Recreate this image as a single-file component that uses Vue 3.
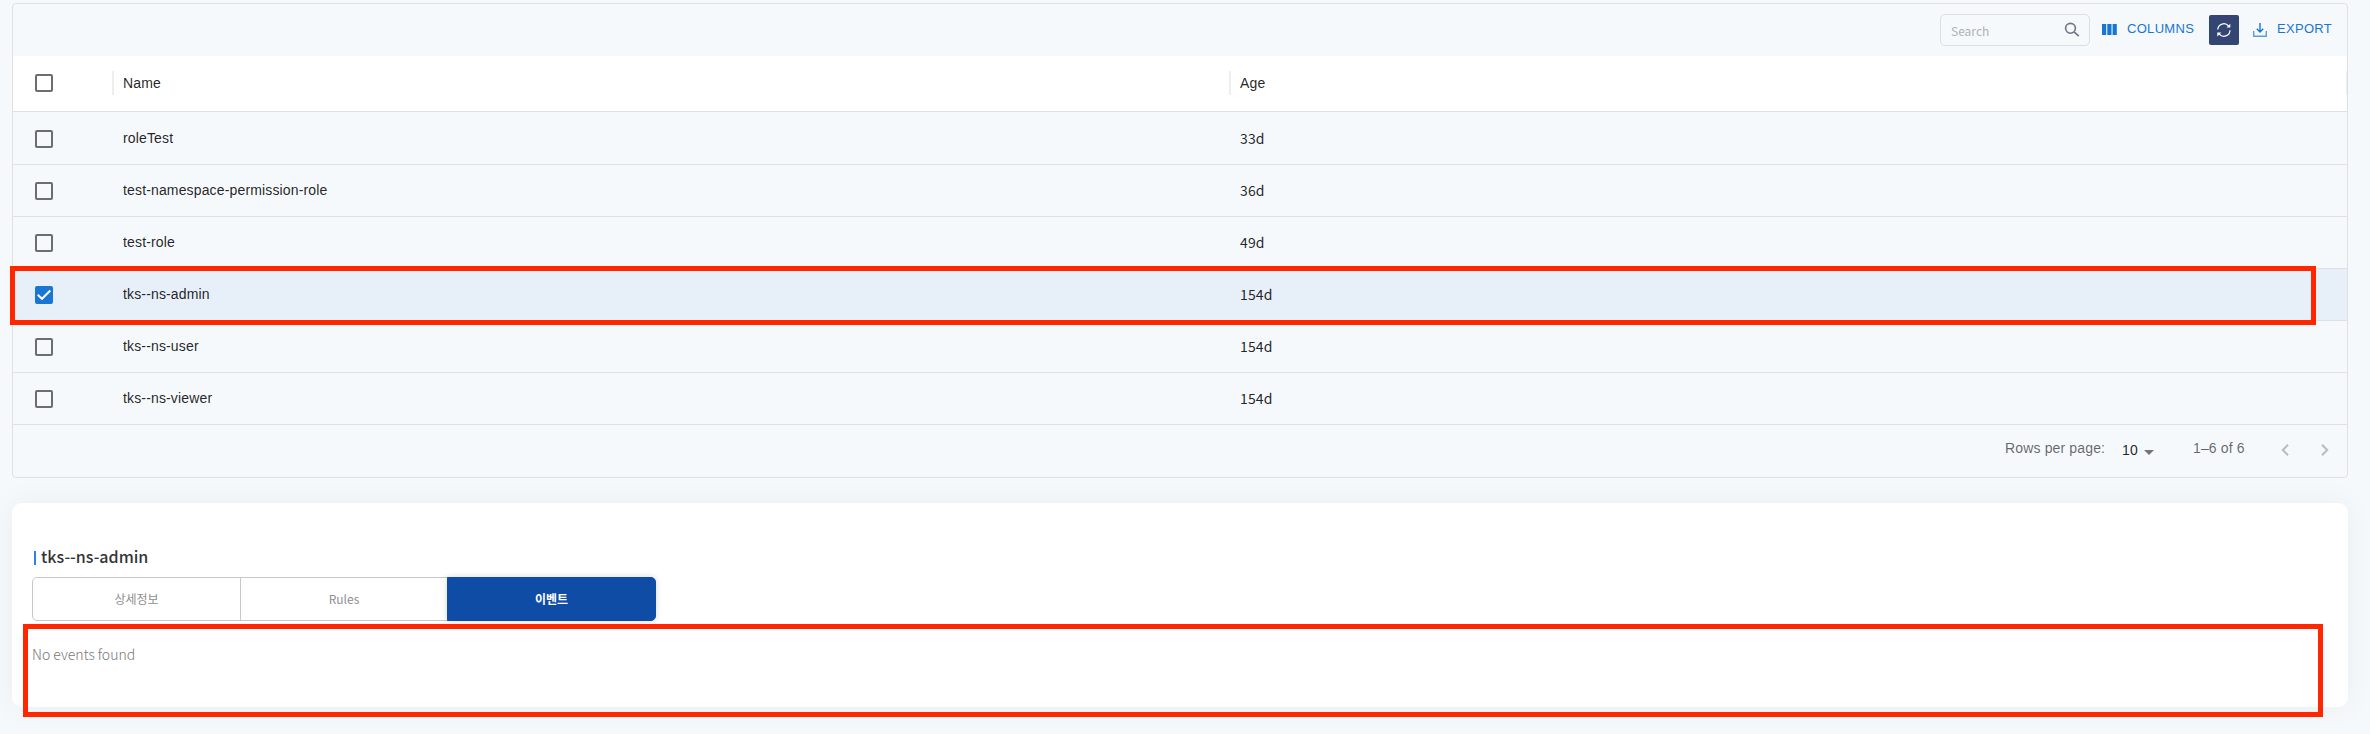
<script setup>
import { ref } from 'vue'

const rows = ref([
  { name: 'roleTest', age: '33d', selected: false },
  { name: 'test-namespace-permission-role', age: '36d', selected: false },
  { name: 'test-role', age: '49d', selected: false },
  { name: 'tks--ns-admin', age: '154d', selected: true },
  { name: 'tks--ns-user', age: '154d', selected: false },
  { name: 'tks--ns-viewer', age: '154d', selected: false },
])
const tabs = ['상세정보', 'Rules', '이벤트']
const activeTab = ref(2)
</script>

<template>
  <main class="page">
    <section class="grid">
      <div class="toolbar">
        <label class="search">
          <span>Search</span>
          <svg width="16" height="16" viewBox="0 0 16 16" fill="none" stroke="#6e7484" stroke-width="1.6">
            <circle cx="6.5" cy="6.3" r="4.9" />
            <path d="M10.1 9.9L14.8 14.2" />
          </svg>
        </label>
        <button class="tool columns">
          <svg width="15" height="11" viewBox="0 0 15 11" fill="#1976d2">
            <path d="M0 0h4.2v11H0zM5.3 0h4.2v11H5.3zM10.6 0h4.2v11h-4.2z" />
          </svg>
          <span>COLUMNS</span>
        </button>
        <button class="refresh">
          <svg width="16" height="16" viewBox="0 0 16 16" fill="none" stroke="#fff" stroke-width="1.2">
            <path d="M1.8 7.6A6 6 0 0 1 12.6 4.2M14 8.2A6 6 0 0 1 3.2 11.8" />
            <path d="M14.3 1.8v3.8h-3.8zM1.3 14.4v-4h4z" fill="#fff" stroke="none" />
          </svg>
        </button>
        <button class="tool export">
          <svg width="14" height="14" viewBox="0 0 14 14" fill="none" stroke="#1976d2" stroke-width="1.4">
            <path d="M7 0v9M3.8 5.8L7 9l3.2-3.2" />
            <path d="M.7 8v5.3h12.6V8" stroke="#5d9bdf" />
          </svg>
          <span>EXPORT</span>
        </button>
      </div>

      <div class="row head">
        <div class="check"><i class="box"></i></div>
        <div class="cell">Name</div>
        <div class="cell">Age</div>
        <div class="end"></div>
      </div>

      <div v-for="row in rows" :key="row.name" class="row" :class="{ selected: row.selected }">
        <div class="check">
          <i class="box" :class="{ checked: row.selected }">
            <svg v-if="row.selected" width="18" height="18" viewBox="0 0 18 18" fill="none" stroke="#fff" stroke-width="2">
              <path d="M2.7 8.8L7 12.8L15.3 4.5" />
            </svg>
          </i>
        </div>
        <div class="cell">{{ row.name }}</div>
        <div class="cell age">{{ row.age }}</div>
      </div>

      <div class="footer">
        <span class="per-page">Rows per page:</span>
        <span class="size">10</span>
        <svg class="caret" width="10" height="5" viewBox="0 0 10 5"><path d="M0 0h10L5 5z" fill="#757575" /></svg>
        <span class="range">1–6 of 6</span>
        <svg class="prev" width="8" height="12" viewBox="0 0 8 12"><path d="M7 .8L1.8 6L7 11.2" /></svg>
        <svg class="next" width="8" height="12" viewBox="0 0 8 12"><path d="M1 .8L6.2 6L1 11.2" /></svg>
      </div>
    </section>

    <section class="card">
      <h2>tks--ns-admin</h2>
      <div class="tabs">
        <button v-for="(tab, i) in tabs" :key="tab" class="tab" :class="{ active: i === activeTab }" @click="activeTab = i">
          {{ tab }}
        </button>
      </div>
      <p>No events found</p>
    </section>

    <div class="mark mark-row"></div>
    <div class="mark mark-events"></div>
  </main>
</template>

<style>
body {
  margin: 0;
  background: #f5f9fc;
}
</style>

<style scoped>
.page {
  position: relative;
  box-sizing: border-box;
  width: 2370px;
  height: 734px;
  padding: 3px 22px 0 12px;
  overflow: hidden;
  background: #f5f9fc;
  font-family: "Liberation Sans", Arial, sans-serif;
  font-size: 14px;
  color: rgba(0, 0, 0, 0.87);
}
button {
  padding: 0;
  border: 0;
  background: none;
  font: inherit;
}
svg {
  display: block;
  flex: none;
}
.grid {
  position: relative;
  z-index: 1;
  box-sizing: border-box;
  height: 475px;
  border: 1px solid #e0e0e0;
  border-radius: 4px;
  letter-spacing: 0.15px;
}
.toolbar {
  display: flex;
  justify-content: flex-end;
  align-items: flex-start;
  box-sizing: border-box;
  height: 52px;
  padding: 10px 15px 0 0;
}
.search {
  display: flex;
  justify-content: space-between;
  box-sizing: border-box;
  width: 150px;
  height: 32px;
  padding: 7px 9px 0 10px;
  border: 1px solid #dcdee0;
  border-radius: 5px;
  font: 12px/17px "Noto Sans CJK KR", sans-serif;
  letter-spacing: 0;
  color: #aeb2b8;
}
.tool {
  display: flex;
  color: #1976d2;
  font-size: 13px;
  line-height: 16px;
  letter-spacing: 0.3px;
}
.columns {
  width: 107px;
  margin: 7px 0 0 12px;
}
.columns svg {
  margin: 3px 10px 0 0;
}
.refresh {
  display: grid;
  place-items: center;
  width: 30px;
  height: 30px;
  margin-top: 1px;
  border-radius: 2px;
  background: #334673;
}
.export {
  width: 79px;
  margin: 7px 0 0 14px;
}
.export svg {
  margin: 2px 10px 0 0;
}
.row {
  display: flex;
  align-items: center;
  box-sizing: border-box;
  height: 52px;
  border-bottom: 1px solid #e0e0e0;
}
.row.head {
  height: 56px;
  background: #fff;
}
.row.head + .row {
  height: 53px;
}
.row.selected {
  background: #e7eff9;
}
.check {
  flex: none;
  width: 100px;
}
.box {
  display: block;
  box-sizing: border-box;
  width: 18px;
  height: 18px;
  margin-left: 22px;
  border: 2px solid #6b6d6e;
  border-radius: 2px;
}
.head .box {
  margin-top: -1px;
}
.row:not(.head) .box {
  margin-top: 1px;
}
.box.checked {
  border: 0;
  background: #1976d2;
}
.cell {
  flex: none;
  box-sizing: border-box;
  width: 1117px;
  padding-left: 10px;
  line-height: 20px;
}
.row:not(.head) .cell {
  padding-bottom: 1px;
}
.row:not(.head) .cell.age {
  padding-bottom: 2px;
}
.row.head + .row .cell.age {
  padding-bottom: 0;
}
.head .cell {
  display: flex;
  align-items: center;
  height: 24px;
  margin-top: -1px;
  margin-left: -1px;
  border-left: 2px solid #eee;
  padding-left: 9px;
}
.head .cell + .cell {
  margin-left: 0;
}
.age {
  font-family: "Noto Sans CJK KR", sans-serif;
}
.end {
  flex: none;
  width: 1px;
  height: 24px;
  margin-top: -1px;
  background: #eee;
}
.footer {
  display: flex;
  align-items: flex-start;
  height: 52px;
  padding: 15px 0 0 1992px;
  line-height: 16px;
  color: rgba(0, 0, 0, 0.6);
}
.per-page {
  width: 117px;
}
.size {
  width: 22px;
  margin-top: 2px;
  color: rgba(0, 0, 0, 0.87);
}
.caret {
  margin: 10px 39px 0 0;
}
.range {
  width: 88px;
}
.prev,
.next {
  margin-top: 4px;
  fill: none;
  stroke: #b9bcbe;
  stroke-width: 2;
}
.next {
  margin-left: 32px;
}
.card {
  box-sizing: border-box;
  height: 204px;
  margin-top: 25px;
  padding: 41px 20px 0;
  border-radius: 10px;
  background: #fff;
  box-shadow: 0 0 30px rgba(0, 0, 0, 0.05);
  font-family: "Noto Sans CJK KR", sans-serif;
}
h2 {
  display: flex;
  align-items: center;
  gap: 5px;
  height: 24px;
  margin: 0 0 9px 2px;
  font-size: 16px;
  font-weight: 500;
  line-height: 24px;
  color: #333;
}
h2::before {
  content: "";
  width: 2px;
  height: 14px;
  margin-top: 4px;
  background: #2f80ed;
}
.tabs {
  display: flex;
  width: 624px;
  height: 44px;
}
.tab {
  box-sizing: border-box;
  width: 209px;
  margin-right: -1px;
  padding-bottom: 1px;
  border: 1px solid #c8c8c8;
  font-size: 12px;
  color: #8e8e8e;
}
.tab:nth-child(2) {
  width: 208px;
}
.tab:first-child {
  border-radius: 5px 0 0 5px;
}
.tab:last-child {
  border-radius: 0 5px 5px 0;
}
.tab.active {
  position: relative;
  padding-bottom: 2px;
  border-color: #0f4ca6;
  background: #0f4ca6;
  box-shadow: 0 0 6px rgba(0, 0, 0, 0.16);
  color: #fff;
  font-size: 12px;
  font-weight: 700;
}
p {
  margin: 22px 0 0;
  font-size: 14px;
  font-weight: 300;
  line-height: 22px;
  color: #777;
}
/* Highlight frames laid over the page */
.mark {
  position: absolute;
  z-index: 2;
  box-sizing: border-box;
  border: 5px solid #ff2600;
}
.mark-row {
  left: 10px;
  top: 266px;
  width: 2306px;
  height: 59px;
}
.mark-events {
  left: 23px;
  top: 624px;
  width: 2300px;
  height: 93px;
}
</style>
